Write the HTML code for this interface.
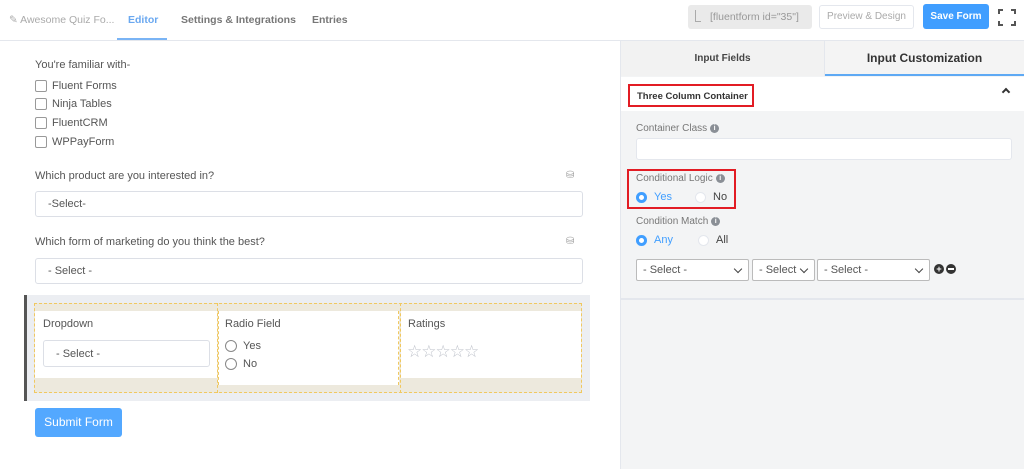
<!DOCTYPE html>
<html><head><style>
*{box-sizing:border-box;margin:0;padding:0}
body{width:1024px;height:469px;overflow:hidden;background:#fff;font-family:"Liberation Sans",sans-serif;position:relative;color:#555}
.a{position:absolute}
.t{font-size:11px;color:#555}
.cb{position:absolute;width:12px;height:12px;border:1px solid #999;border-radius:2px;background:#fff}
.sel{position:absolute;border:1px solid #dcdfe6;border-radius:3px;background:#fff;font-size:11px;color:#555;padding-left:12px;display:flex;align-items:center}
.rd{position:absolute;width:12px;height:12px;border-radius:50%;border:1px solid #888;background:#fff}
.rb{position:absolute;width:11px;height:11px;border-radius:50%;background:#409eff;box-shadow:inset 0 0 0 3px #409eff, inset 0 0 0 6px #fff}
.rw{position:absolute;width:11px;height:11px;border-radius:50%;background:#fff;border:1px solid #e4e7ed}
.i{display:inline-block;width:9px;height:9px;border-radius:50%;background:#8a8f96;color:#fff;font-size:7px;text-align:center;line-height:9px;font-weight:bold;vertical-align:middle;margin-left:3px}
.ss{position:absolute;height:22px;border:1px solid #bbb;border-radius:2px;background:#fff;font-size:11px;color:#555;padding-left:6px;display:flex;align-items:center}
.ss:after{content:"";position:absolute;right:7px;top:6px;width:5px;height:5px;border-right:1.5px solid #444;border-bottom:1.5px solid #444;transform:rotate(45deg)}
</style></head><body>
<div class="a" style="left:0;top:40px;width:1024px;height:1px;background:#e4e7ed"></div>
<div class="a t" style="left:9px;top:14px;color:#aaa;font-size:10.5px">✎ Awesome Quiz Fo...</div>
<div class="a" style="left:128px;top:14px;font-size:10.5px;font-weight:bold;color:#6aa8f0">Editor</div>
<div class="a" style="left:117px;top:38px;width:50px;height:2px;background:#7ab4f5"></div>
<div class="a" style="left:181px;top:14px;font-size:10.5px;font-weight:bold;color:#777">Settings &amp; Integrations</div>
<div class="a" style="left:312px;top:14px;font-size:10.5px;font-weight:bold;color:#777">Entries</div>
<div class="a" style="left:688px;top:5px;width:124px;height:24px;background:#eaeaea;border-radius:3px;font-size:10.5px;color:#999;line-height:24px;padding-left:22px">[fluentform id="35"]</div>
<div class="a" style="left:695px;top:10px;width:6px;height:12px;border-left:1px solid #aaa;border-bottom:1px solid #aaa"></div>
<div class="a" style="left:819px;top:5px;width:95px;height:24px;border:1px solid #e4e7ed;border-radius:3px;font-size:10px;color:#aaa;text-align:center;line-height:22px">Preview &amp; Design</div>
<div class="a" style="left:923px;top:4px;width:66px;height:25px;background:#409eff;border-radius:3px;font-size:10px;color:#fff;text-align:center;line-height:25px;font-weight:bold">Save Form</div>
<svg class="a" style="left:998px;top:9px" width="18" height="17" viewBox="0 0 18 17"><path d="M1 5V1h4M13 1h4v4M17 12v4h-4M5 16H1v-4" stroke="#555" stroke-width="2" fill="none"/></svg>
<div class="a t" style="left:35px;top:59px">You're familiar with-</div>
<div class="cb" style="left:35px;top:80px"></div><div class="a t" style="left:52px;top:80px">Fluent Forms</div>
<div class="cb" style="left:35px;top:98px"></div><div class="a t" style="left:52px;top:98px">Ninja Tables</div>
<div class="cb" style="left:35px;top:117px"></div><div class="a t" style="left:52px;top:117px">FluentCRM</div>
<div class="cb" style="left:35px;top:136px"></div><div class="a t" style="left:52px;top:136px">WPPayForm</div>
<div class="a t" style="left:35px;top:170px">Which product are you interested in?</div>
<div class="a" style="left:566px;top:170px;font-size:10px;color:#999">⛁</div>
<div class="sel" style="left:35px;top:191px;width:548px;height:26px">-Select-</div>
<div class="a t" style="left:35px;top:236px">Which form of marketing do you think the best?</div>
<div class="a" style="left:566px;top:236px;font-size:10px;color:#999">⛁</div>
<div class="sel" style="left:35px;top:258px;width:548px;height:26px">- Select -</div>
<div class="a" style="left:24px;top:295px;width:566px;height:106px;background:#eceef2;border-left:3px solid #555"></div>
<div class="a" style="left:34px;top:303px;width:548px;height:90px;background:#ede9dd;border:1px dashed #f0c860"></div>
<div class="a" style="left:35px;top:311px;width:182px;height:67px;background:#fff"></div>
<div class="a" style="left:218px;top:311px;width:181px;height:74px;background:#fff;border-left:1px dashed #f0c860;border-right:1px dashed #f0c860"></div>
<div class="a" style="left:217px;top:303px;width:1px;height:90px;border-left:1px dashed #f0c860"></div>
<div class="a" style="left:400px;top:303px;width:1px;height:90px;border-left:1px dashed #f0c860"></div>
<div class="a" style="left:401px;top:311px;width:180px;height:67px;background:#fff"></div>
<div class="a t" style="left:43px;top:318px">Dropdown</div>
<div class="sel" style="left:43px;top:340px;width:167px;height:27px;padding-left:12px">- Select -</div>
<div class="a t" style="left:225px;top:318px">Radio Field</div>
<div class="rd" style="left:225px;top:340px"></div><div class="a t" style="left:243px;top:340px">Yes</div>
<div class="rd" style="left:225px;top:358px"></div><div class="a t" style="left:243px;top:358px">No</div>
<div class="a t" style="left:408px;top:318px">Ratings</div>
<div class="a" style="left:407px;top:342px;font-size:17px;color:#c0c4cc;letter-spacing:-1px">☆☆☆☆☆</div>
<div class="a" style="left:35px;top:408px;width:87px;height:29px;background:#53a8ff;border-radius:3px;color:#fff;font-size:12px;text-align:center;line-height:29px">Submit Form</div>
<div class="a" style="left:620px;top:41px;width:404px;height:428px;background:#f3f4f5;border-left:1px solid #e4e7ed"></div>
<div class="a" style="left:621px;top:41px;width:204px;height:35px;background:#f2f2f2;font-size:10px;font-weight:bold;color:#444;text-align:center;line-height:35px;border-right:1px solid #e4e7ed">Input Fields</div>
<div class="a" style="left:825px;top:41px;width:199px;height:35px;background:#f4f4f4;font-size:12px;font-weight:bold;color:#333;text-align:center;line-height:34px;border-bottom:2px solid #5ea9f4">Input Customization</div>
<div class="a" style="left:621px;top:77px;width:403px;height:34px;background:#fff"></div>
<div class="a" style="left:628px;top:84px;width:126px;height:23px;border:2px solid #e21c24;font-size:9.5px;font-weight:bold;color:#333;padding:5px 0 0 7px">Three Column Container</div>
<div class="a" style="left:1003px;top:89px;width:6px;height:6px;border-left:2px solid #333;border-top:2px solid #333;transform:rotate(45deg)"></div>
<div class="a t" style="left:636px;top:123px;font-size:10px;color:#777">Container Class<span class="i">i</span></div>
<div class="a" style="left:636px;top:138px;width:376px;height:22px;background:#fff;border:1px solid #e4e7ed;border-radius:3px"></div>
<div class="a" style="left:627px;top:169px;width:109px;height:40px;border:2px solid #e21c24"></div>
<div class="a t" style="left:636px;top:173px;font-size:10px;color:#777">Conditional Logic<span class="i">i</span></div>
<div class="rb" style="left:636px;top:192px"></div><div class="a" style="left:654px;top:191px;font-size:11px;color:#409eff">Yes</div>
<div class="rw" style="left:695px;top:192px"></div><div class="a" style="left:713px;top:191px;font-size:11px;color:#444">No</div>
<div class="a t" style="left:636px;top:216px;font-size:10px;color:#777">Condition Match<span class="i">i</span></div>
<div class="rb" style="left:636px;top:235px"></div><div class="a" style="left:654px;top:234px;font-size:11px;color:#409eff">Any</div>
<div class="rw" style="left:698px;top:235px"></div><div class="a" style="left:716px;top:234px;font-size:11px;color:#444">All</div>
<div class="ss" style="left:636px;top:259px;width:113px">- Select -</div>
<div class="ss" style="left:752px;top:259px;width:63px">- Select</div>
<div class="ss" style="left:817px;top:259px;width:113px">- Select -</div>
<div class="a" style="left:934px;top:264px;width:10px;height:10px;border-radius:50%;background:#333;color:#fff;font-size:9px;line-height:10px;text-align:center;font-weight:bold">+</div>
<div class="a" style="left:946px;top:264px;width:10px;height:10px;border-radius:50%;background:#333"><div style="margin:4px 2px;height:2px;background:#fff"></div></div>
<div class="a" style="left:621px;top:298px;width:403px;height:2px;background:#e4e7ed"></div>
</body></html>
